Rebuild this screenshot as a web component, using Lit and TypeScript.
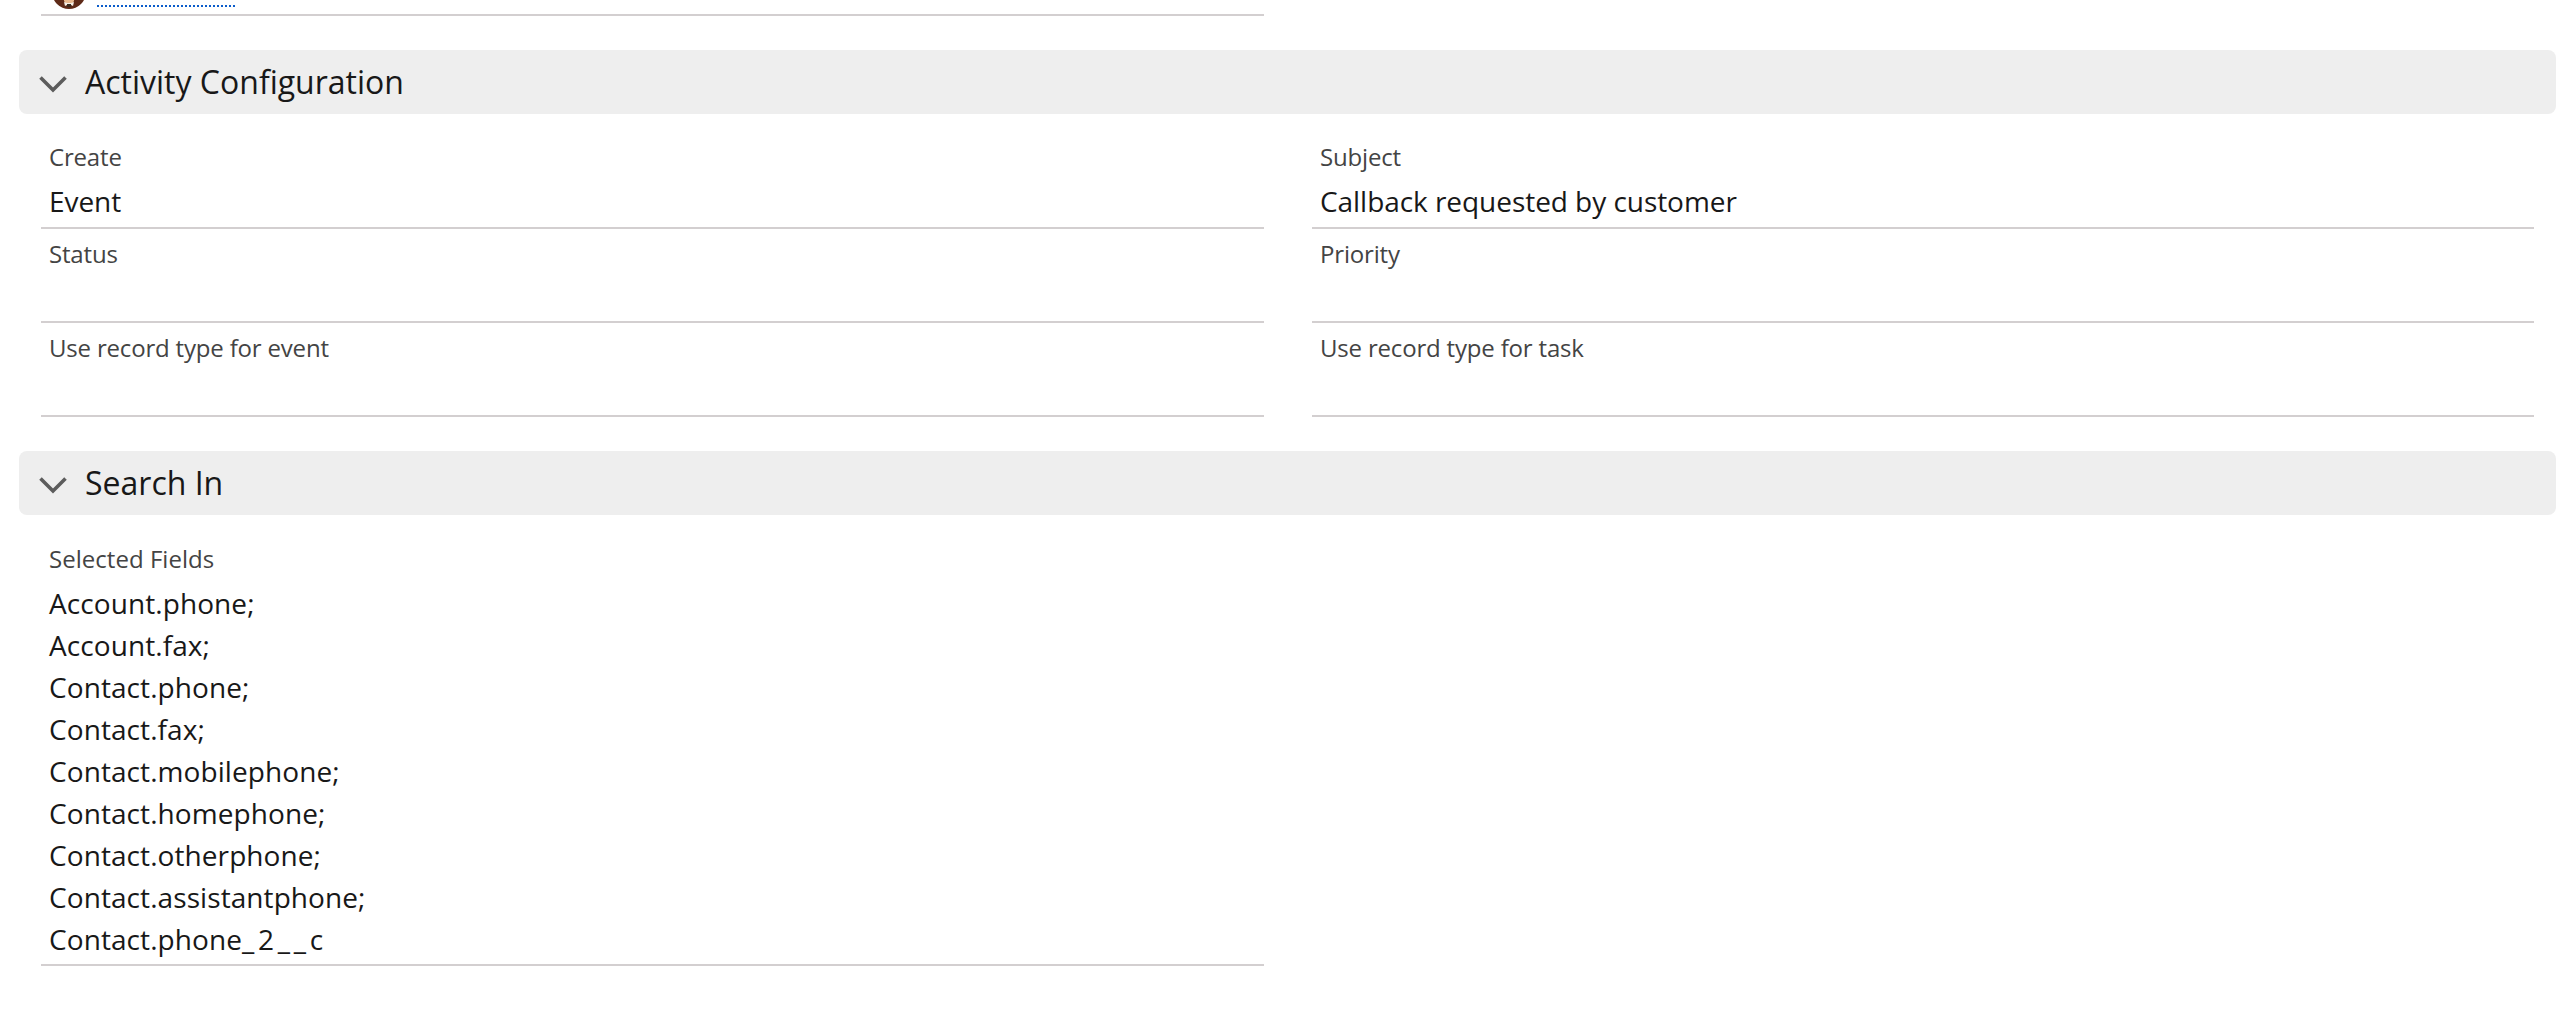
import { LitElement, html, css } from "lit";
import { customElement } from "lit/decorators.js";

const chevron = html`<svg class="chev" viewBox="0 0 28 18" aria-hidden="true"><path d="M1.5 2.5 14 15 26.5 2.5" fill="none" stroke="#5c5c5c" stroke-width="3.6"/></svg>`;

@customElement("app-root")
export class AppRoot extends LitElement {
  static styles = css`
    :host { display: block; width: 2568px; height: 1034px; overflow: hidden; background: #fff;
      font-family: "Open Sans", "Noto Sans", sans-serif; color: #181818; }
    .top { height: 16px; padding-left: 41px; }
    .top-cell { width: 1223px; height: 16px; box-sizing: border-box; border-bottom: 2px solid #d3cfd0; display: flex; overflow: hidden; }
    .avatar { width: 34px; height: 34px; margin: -25px 0 0 11px; flex: none; }
    .link { width: 138px; height: 7px; margin-left: 11px; border-bottom: 2px dotted #0b5cca; box-sizing: border-box; }
    .sec { margin: 34px 12px 0 19px; height: 64px; background: #eee; border-radius: 8px; display: flex; align-items: center; padding-left: 20px; box-sizing: border-box; }
    .chev { width: 28px; height: 18px; flex: none; margin: 3px 18px 0 0; }
    .sec h3 { margin: 0; font-size: 32px; font-weight: 400; line-height: 40px; color: #181818; }
    .grid { display: grid; grid-template-columns: 1223px 1222px; column-gap: 48px; padding: 18px 0 0 41px; }
    .field { height: 94px; box-sizing: border-box; border-bottom: 2px solid #d3cfd0; padding: 7px 8px 0; }
    .field.first { height: 97px; }
    .field.first .label { margin-bottom: 5px; }
    .label { font-size: 24px; line-height: 36px; color: #444; display: block; letter-spacing: -0.18px; }
    .value { font-size: 28px; line-height: 42px; color: #181818; display: block; letter-spacing: -0.05px; }
    .list { margin: 21px 0 0 41px; width: 1223px; box-sizing: border-box; border-bottom: 2px solid #d3cfd0; padding: 5px 8px 4px; }
    .list .label { margin-bottom: 5px; letter-spacing: 0.03px; }
    .list .value { letter-spacing: 0.08px; }
    .list .value .wide { letter-spacing: 3.7px; }
  `;

  private field(label: string, value = "", first = false) {
    return html`<div class="field ${first ? "first" : ""}"><span class="label">${label}</span><span class="value">${value}</span></div>`;
  }

  render() {
    const items = ["Account.phone;", "Account.fax;", "Contact.phone;", "Contact.fax;", "Contact.mobilephone;", "Contact.homephone;", "Contact.otherphone;", "Contact.assistantphone;"];
    return html`
      <div class="top"><div class="top-cell">
        <svg class="avatar" viewBox="0 0 34 34" aria-hidden="true">
          <circle cx="17" cy="17" r="17" fill="#5e2a18"/>
          <path d="M12 20h10v6l-2 3h-6l-2-3z" fill="#e9b98f"/>
          <path d="M12 27l3 1h4l3-1-1 4-2-1h-4l-2 1z" fill="#f4efe6"/>
          <path d="M15 29h4v3h-4z" fill="#3a2a1e"/>
        </svg>
        <div class="link"></div>
      </div></div>
      <div class="sec">${chevron}<h3>Activity Configuration</h3></div>
      <div class="grid">
        ${this.field("Create", "Event", true)}
        ${this.field("Subject", "Callback requested by customer", true)}
        ${this.field("Status")}
        ${this.field("Priority")}
        ${this.field("Use record type for event")}
        ${this.field("Use record type for task")}
      </div>
      <div class="sec">${chevron}<h3>Search In</h3></div>
      <div class="list">
        <span class="label">Selected Fields</span>
        ${items.map((i) => html`<span class="value">${i}</span>`)}
        <span class="value">Contact.phone<span class="wide">_2__</span>c</span>
      </div>
    `;
  }
}
